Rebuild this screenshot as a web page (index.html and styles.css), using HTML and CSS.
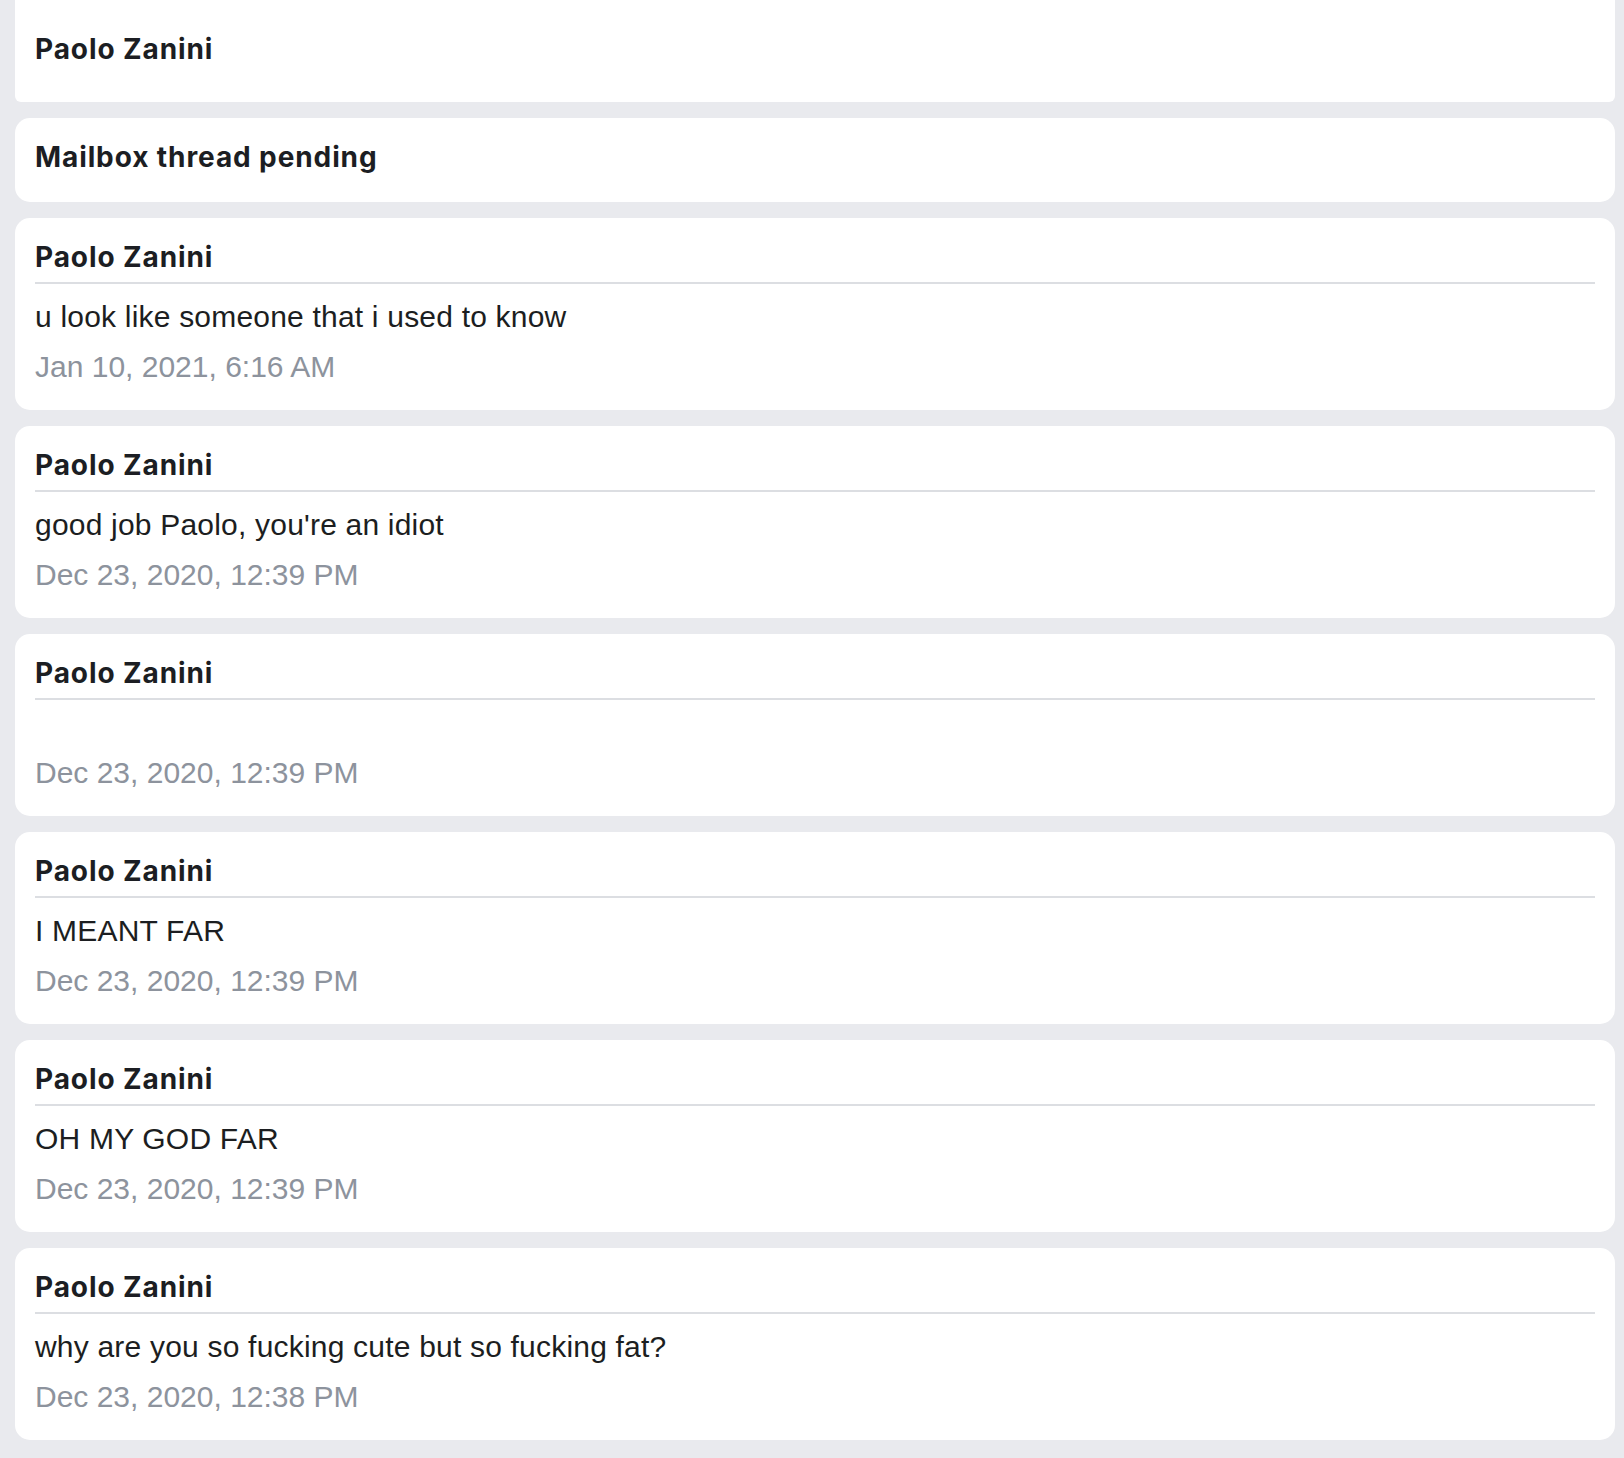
FILE: index.html
```html
<!DOCTYPE html>
<html lang="en">
<head>
<meta charset="utf-8">
<title>Mailbox thread</title>
<link rel="stylesheet" href="styles.css">
</head>
<body>
<div class="page">
  <div class="card card-top">
    <div class="name">Paolo Zanini</div>
  </div>
  <div class="card card-plain">
    <div class="name">Mailbox thread pending</div>
  </div>
  <div class="card msg">
    <div class="name sep">Paolo Zanini</div>
    <div class="text">u look like someone that i used to know</div>
    <div class="date">Jan 10, 2021, 6:16 AM</div>
  </div>
  <div class="card msg">
    <div class="name sep">Paolo Zanini</div>
    <div class="text">good job Paolo, you're an idiot</div>
    <div class="date">Dec 23, 2020, 12:39 PM</div>
  </div>
  <div class="card msg empty">
    <div class="name sep">Paolo Zanini</div>
    <div class="text"></div>
    <div class="date">Dec 23, 2020, 12:39 PM</div>
  </div>
  <div class="card msg">
    <div class="name sep">Paolo Zanini</div>
    <div class="text">I MEANT FAR</div>
    <div class="date">Dec 23, 2020, 12:39 PM</div>
  </div>
  <div class="card msg">
    <div class="name sep">Paolo Zanini</div>
    <div class="text">OH MY GOD FAR</div>
    <div class="date">Dec 23, 2020, 12:39 PM</div>
  </div>
  <div class="card msg">
    <div class="name sep">Paolo Zanini</div>
    <div class="text">why are you so fucking cute but so fucking fat?</div>
    <div class="date">Dec 23, 2020, 12:38 PM</div>
  </div>
</div>
</body>
</html>
```

FILE: styles.css
```css
html, body {
  margin: 0;
  padding: 0;
  background: #e9eaee;
}

.page {
  display: flex;
  flex-direction: column;
  gap: 16px;
  padding: 0 9px 20px 15px;
}

.card {
  background: #ffffff;
  border-radius: 15px;
  padding: 22px 20px 20px;
}

.card-top {
  border-radius: 0 0 6px 6px;
  padding: 32px 20px 36px;
}

.name {
  font-family: Inter, "Noto Sans", sans-serif;
  font-weight: 700;
  font-size: 28px;
  line-height: 34px;
  letter-spacing: 0.9px;
  color: #1c1e23;
}

.card-plain .name {
  padding-bottom: 8px;
}

.name.sep {
  padding-bottom: 8px;
  border-bottom: 2px solid #dcdee2;
}

.text {
  font-family: "Liberation Sans", Arial, sans-serif;
  font-size: 30px;
  line-height: 40px;
  letter-spacing: 0.2px;
  color: #1c1e21;
  margin-top: 13px;
  margin-bottom: 10px;
  min-height: 40px;
}

.date {
  font-family: "Liberation Sans", Arial, sans-serif;
  font-size: 30px;
  line-height: 40px;
  color: #8d939d;
  margin-bottom: 3px;
}

.empty .text {
  margin-bottom: 0;
}

.empty .date {
  margin-bottom: 3px;
}
```
